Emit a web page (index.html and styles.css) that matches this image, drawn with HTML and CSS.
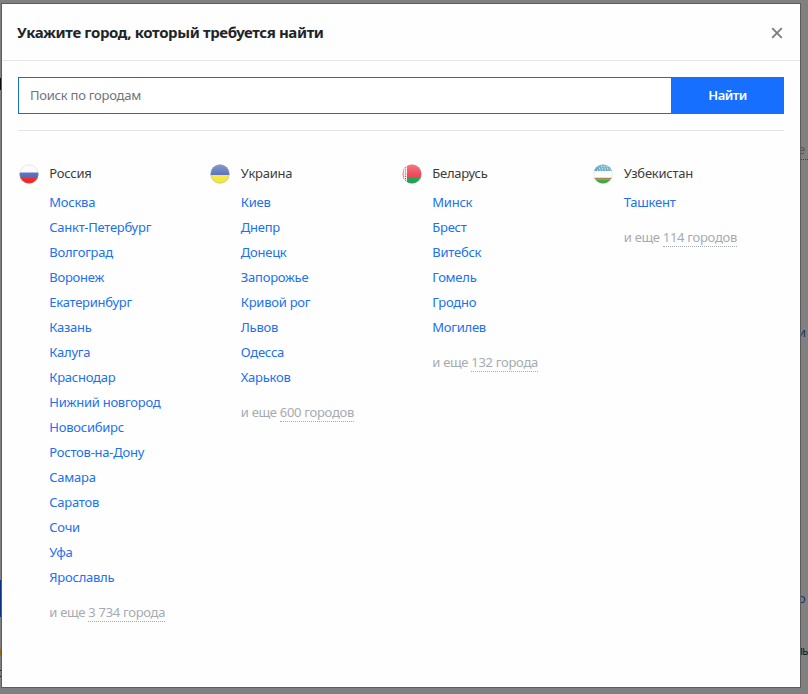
FILE: index.html
```html
<!DOCTYPE html>
<html lang="ru">
<head>
<meta charset="utf-8">
<title>Выбор города</title>
<link rel="stylesheet" href="styles.css">
</head>
<body>
<div class="behind" aria-hidden="true">
  <i class="mark mark-dark"></i><i class="mark mark-blue"></i><i class="mark mark-orange"></i><i class="mark mark-line"></i>
  <span class="bit bit-e">е</span><span class="bit bit-i">и</span><span class="bit bit-o">о</span><span class="bit bit-l">ль</span>
</div>
<section class="modal" role="dialog">
  <header class="head">
    <h1>Укажите город, который требуется найти</h1>
    <svg class="close" viewBox="0 0 12 12"><path d="M1.2 1.2 10.8 10.8M10.8 1.2 1.2 10.8"/></svg>
  </header>
  <main class="body">
    <form class="search">
      <input type="text" placeholder="Поиск по городам">
      <button type="button">Найти</button>
    </form>
    <div class="countries">
      <section class="country">
        <h2><svg class="flag" viewBox="0 0 20 20"><defs><clipPath id="c"><circle cx="10" cy="10" r="9.5"/></clipPath><linearGradient id="g" x2="0" y2="1"><stop stop-color="#fff" stop-opacity=".35"/><stop offset=".5" stop-color="#fff" stop-opacity=".12"/><stop offset="1" stop-color="#fff" stop-opacity="0"/></linearGradient></defs><g clip-path="url(#c)"><path fill="#fafafa" d="M0 0h20v8.5H0z"/><path fill="#4260b8" d="M0 8.5h20v5.5H0z"/><path fill="#f0201c" d="M0 14h20v6H0z"/><path fill="url(#g)" d="M0 0h20v20H0z"/></g><circle class="rim" cx="10" cy="10" r="9.2"/></svg>Россия</h2>
        <ul><li>Москва</li><li>Санкт-Петербург</li><li>Волгоград</li><li>Воронеж</li><li>Екатеринбург</li><li>Казань</li><li>Калуга</li><li>Краснодар</li><li>Нижний новгород</li><li>Новосибирс</li><li>Ростов-на-Дону</li><li>Самара</li><li>Саратов</li><li>Сочи</li><li>Уфа</li><li>Ярославль</li></ul>
        <p>и еще <span>3 734 города</span></p>
      </section>
      <section class="country">
        <h2><svg class="flag" viewBox="0 0 20 20"><g clip-path="url(#c)"><path fill="#4a64b4" d="M0 0h20v11H0z"/><path fill="#f4e638" d="M0 11h20v9H0z"/><path fill="url(#g)" d="M0 0h20v20H0z"/></g><circle class="rim rim-strong" cx="10" cy="10" r="9.2"/></svg>Украина</h2>
        <ul><li>Киев</li><li>Днепр</li><li>Донецк</li><li>Запорожье</li><li>Кривой рог</li><li>Львов</li><li>Одесса</li><li>Харьков</li></ul>
        <p>и еще <span>600 городов</span></p>
      </section>
      <section class="country">
        <h2><svg class="flag" viewBox="0 0 20 20"><g clip-path="url(#c)"><path fill="#ee3448" d="M0 0h20v14H0z"/><path fill="#17a04a" d="M0 14h20v6H0z"/><path fill="#fff" d="M0 0h5v20H0z"/><path stroke="#d83048" stroke-width="1.2" stroke-dasharray="1.2 1" d="M1.6 5v11M3.6 3v15"/><path fill="url(#g)" d="M0 0h20v20H0z"/></g><circle class="rim" cx="10" cy="10" r="9.2"/></svg>Беларусь</h2>
        <ul><li>Минск</li><li>Брест</li><li>Витебск</li><li>Гомель</li><li>Гродно</li><li>Могилев</li></ul>
        <p>и еще <span>132 города</span></p>
      </section>
      <section class="country">
        <h2><svg class="flag" viewBox="0 0 20 20"><g clip-path="url(#c)"><path fill="#3492b2" d="M0 0h20v7H0z"/><path fill="#fff" d="M0 7h20v7H0z"/><path fill="#a8784c" d="M0 13.7h20v1.5H0z"/><path fill="#36a936" d="M0 15.2h20v4.8H0z"/><path stroke="#e8f8fa" stroke-width="1" stroke-dasharray="1.2 1.4" d="M8 2.2h8M6 4.2h11M4 6h14"/><path fill="url(#g)" d="M0 0h20v20H0z"/></g><circle class="rim" cx="10" cy="10" r="9.2"/></svg>Узбекистан</h2>
        <ul><li>Ташкент</li></ul>
        <p>и еще <span>114 городов</span></p>
      </section>
    </div>
  </main>
</section>
</body>
</html>
```
FILE: styles.css
```css
* { box-sizing: border-box; margin: 0; padding: 0; }
body {
  height: 694px;
  overflow: hidden;
  background: #808080;
  padding: 3px 7px 6px 1px;
  font: 13px/25px "Noto Sans", "Open Sans", sans-serif;
  letter-spacing: -0.25px;
  color: #3c3c3c;
}
.modal {
  position: relative;
  height: 685px;
  background: #fefefe;
  border: 1px solid #5c5c5c;
}
.head {
  height: 57px;
  padding: 0 17px 0 15px;
  border-bottom: 1px solid #e3e5e7;
  display: flex;
  align-items: center;
  justify-content: space-between;
}
.head h1 { font-size: 15px; font-weight: 700; letter-spacing: -0.37px; color: #212529; }
.close { width: 12px; height: 12px; margin-top: 1px; stroke: #7e7e7e; stroke-width: 1.9; fill: none; }
.body { padding: 16px 16px 0; }
.search {
  display: flex;
  height: 54px;
  padding-bottom: 17px;
  border-bottom: 1px solid #e3e5e7;
}
.search input {
  flex: 1;
  min-width: 0;
  height: 37px;
  border: 1px solid #1b6ec2;
  border-right: 0;
  background: #fff;
  padding: 0 11px 2px;
  font: inherit;
  letter-spacing: inherit;
}
.search input::placeholder { color: #6c757d; opacity: 1; }
.search button {
  width: 113px;
  height: 37px;
  padding-bottom: 2px;
  border: 0;
  background: #176fff;
  color: #fff;
  font: 600 13px "Noto Sans", sans-serif;
  letter-spacing: -0.45px;
}
.countries { display: grid; grid-template-columns: repeat(4, 1fr); padding-top: 30px; }
.country h2 {
  display: flex;
  align-items: center;
  height: 25px;
  margin-bottom: 4px;
  font-size: 13px;
  font-weight: 400;
}
.flag { width: 20px; height: 20px; margin: 0 10.7px 0 0.6px; }
.rim { fill: none; stroke: #aaa; stroke-opacity: .3; stroke-width: .8; }
.rim-strong { stroke-opacity: .5; }
.country ul { list-style: none; padding-left: 31.3px; color: #2070f0; }
.country p { margin-top: 10px; padding-left: 31.3px; letter-spacing: -0.3px; color: #a5abb1; }
.country p span { display: inline-block; line-height: 18px; border-bottom: 1px dotted #a5abb1; }
.mark, .bit { position: absolute; }
.mark { left: 0; width: 2px; }
.mark-dark { top: 78px; height: 12px; background: #080c14; }
.mark-blue { top: 580px; height: 37px; background: #0b3283; }
.mark-orange { top: 649px; height: 7px; background: #94681e; }
.mark-line { top: 670px; height: 7px; border: solid #222; border-width: 1px 0; }
.bit { left: 798px; line-height: 18px; }
.bit-e { top: 140px; height: 20px; width: 10px; color: #555; border-bottom: 1px dotted #444; }
.bit-i { top: 323px; color: #1c3568; }
.bit-o { top: 589px; color: #1c3568; }
.bit-l { top: 642px; left: 796px; font-size: 12px; letter-spacing: -1px; color: #222; }
```
